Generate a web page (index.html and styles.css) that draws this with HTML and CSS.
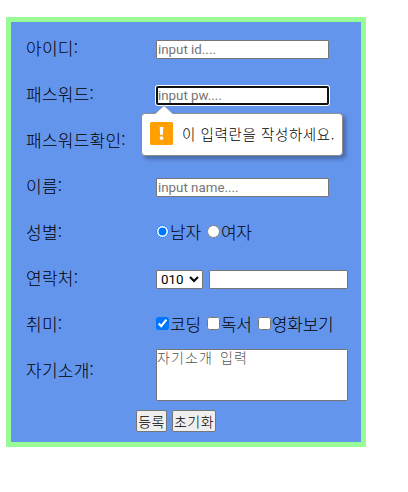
FILE: index.html
```html
<!DOCTYPE html>
<html lang="ko">
<head>
  <meta charset="UTF-8">
  <meta name="viewport" content="width=device-width, initial-scale=1.0">
  <title>회원가입</title>
  <link rel="stylesheet" href="styles.css">
</head>
<body>
  <form class="join">
    <div class="row">
      <label class="title" for="id">아이디:</label>
      <input class="text" type="text" id="id" placeholder="input id....">
    </div>
    <div class="row">
      <label class="title" for="pw">패스워드:</label>
      <div class="field">
        <input class="text focus" type="password" id="pw" placeholder="input pw....">
        <div class="bubble">
          <svg class="arrow" width="18" height="10" viewBox="0 0 18 10">
            <path d="M0 10V9L9 0.5L18 9V10Z" fill="#fff"/>
            <path d="M0.5 8.5L9 0.5L17.5 8.5" fill="none" stroke="#8d8d8d" stroke-width="0.7"/>
          </svg>
          <svg class="warn" width="23" height="23" viewBox="0 0 23 23">
            <rect width="23" height="23" rx="1.5" fill="#ffa000"/>
            <path d="M9.7 5H13.3L12.8 13H10.2Z" fill="#fff"/>
            <rect x="9.8" y="14.6" width="3.4" height="3.2" rx="1" fill="#fff"/>
          </svg>
          <span>이 입력란을 작성하세요.</span>
        </div>
      </div>
    </div>
    <div class="row">
      <label class="title" for="pw2">패스워드확인:</label>
      <input class="text" type="password" id="pw2">
    </div>
    <div class="row">
      <label class="title" for="name">이름:</label>
      <input class="text" type="text" id="name" placeholder="input name....">
    </div>
    <div class="row">
      <span class="title">성별:</span>
      <div class="choices">
        <label class="choice"><input type="radio" name="gender" checked><span>남자</span></label>
        <label class="choice"><input type="radio" name="gender"><span>여자</span></label>
      </div>
    </div>
    <div class="row">
      <label class="title" for="tel">연락처:</label>
      <select class="tel-first">
        <option>010</option>
      </select>
      <input class="text tel" type="text" id="tel">
    </div>
    <div class="row">
      <span class="title">취미:</span>
      <div class="choices">
        <label class="choice"><input type="checkbox" checked><span>코딩</span></label>
        <label class="choice"><input type="checkbox"><span>독서</span></label>
        <label class="choice"><input type="checkbox"><span>영화보기</span></label>
      </div>
    </div>
    <div class="row intro">
      <label class="title" for="intro">자기소개:</label>
      <textarea class="memo" id="intro" placeholder="자기소개 입력"></textarea>
    </div>
    <div class="buttons">
      <button class="btn submit" type="submit">등록</button>
      <button class="btn reset" type="reset">초기화</button>
    </div>
  </form>
</body>
</html>
```
FILE: styles.css
```css
* {
  box-sizing: border-box;
}
body {
  margin: 0;
  padding: 17px 0 0 6px;
  background-color: #fff;
  font-family: "Noto Sans CJK KR", sans-serif;
  font-size: 17px;
  font-weight: 300;
  color: #000;
}
.join {
  width: 360px;
  height: 430px;
  padding: 4px 0 0 15px;
  border: 5px solid palegreen;
  background-color: cornflowerblue;
}
.row {
  display: flex;
  align-items: center;
  height: 46px;
}
.title {
  width: 130px;
  line-height: 20px;
  letter-spacing: 0.25px;
  margin-top: -2px;
}
.text {
  display: block;
  width: 173px;
  height: 19px;
  margin: 0;
  padding: 0 1px;
  border: 1px solid #767676;
  border-radius: 1px;
  background-color: #fff;
  font-family: Roboto, sans-serif;
  font-size: 13.33px;
}
.text::placeholder {
  color: #757575;
}
.memo::placeholder {
  color: #555;
}
.field {
  position: relative;
}
.focus {
  padding: 0;
  border: 2px solid #101010;
  border-radius: 2px;
  box-shadow: 0 0 0 1px #fff;
}
.bubble {
  position: absolute;
  top: 27px;
  left: -15px;
  z-index: 1;
  display: flex;
  align-items: center;
  gap: 9px;
  width: 202px;
  height: 43px;
  padding: 0 0 2px 8px;
  border: 1px solid #8d8d8d;
  border-radius: 4px;
  background-color: #fff;
  box-shadow: 3px 3px 4px rgba(0, 0, 0, 0.3);
  font-size: 14.5px;
  letter-spacing: 0.6px;
  white-space: nowrap;
}
.arrow {
  position: absolute;
  top: -9px;
  left: 13px;
}
.warn {
  flex: none;
}
.choices {
  display: flex;
  gap: 6px;
  margin-top: -3px;
}
.choice {
  display: flex;
  align-items: center;
  line-height: 20px;
  letter-spacing: -0.2px;
}
.choice input {
  width: 13px;
  height: 13px;
  margin: 0 1px 0 0;
}
.choice span {
  margin-top: 0;
}
.tel-first {
  width: 47px;
  height: 19px;
  margin-right: 6px;
  padding: 0;
  border: 1px solid #767676;
  border-radius: 1px;
  background-color: #fff;
  font-family: Roboto, sans-serif;
  font-size: 13.33px;
}
.tel {
  width: 139px;
}
.intro {
  height: 54px;
  padding-top: 1px;
  margin-bottom: 8px;
  align-items: flex-start;
}
.intro .title {
  margin-top: 11px;
}
.memo {
  width: 192px;
  height: 52px;
  padding: 0;
  border: 1px solid #767676;
  border-radius: 1px;
  resize: none;
  font-family: "Noto Sans CJK KR", sans-serif;
  font-size: 14px;
  font-weight: 300;
  line-height: 14px;
  letter-spacing: 1.1px;
  word-spacing: 2px;
}
.buttons {
  display: flex;
  gap: 5px;
  margin-left: 110px;
}
.btn {
  height: 22px;
  padding: 0;
  border: 1px solid #767676;
  border-radius: 2px;
  background-color: #efefef;
  color: #000;
  font-family: "Noto Sans CJK KR", sans-serif;
  font-size: 14px;
  font-weight: 300;
  line-height: 18px;
  letter-spacing: 0.4px;
}
.submit {
  width: 31px;
}
.reset {
  width: 44px;
}
```
